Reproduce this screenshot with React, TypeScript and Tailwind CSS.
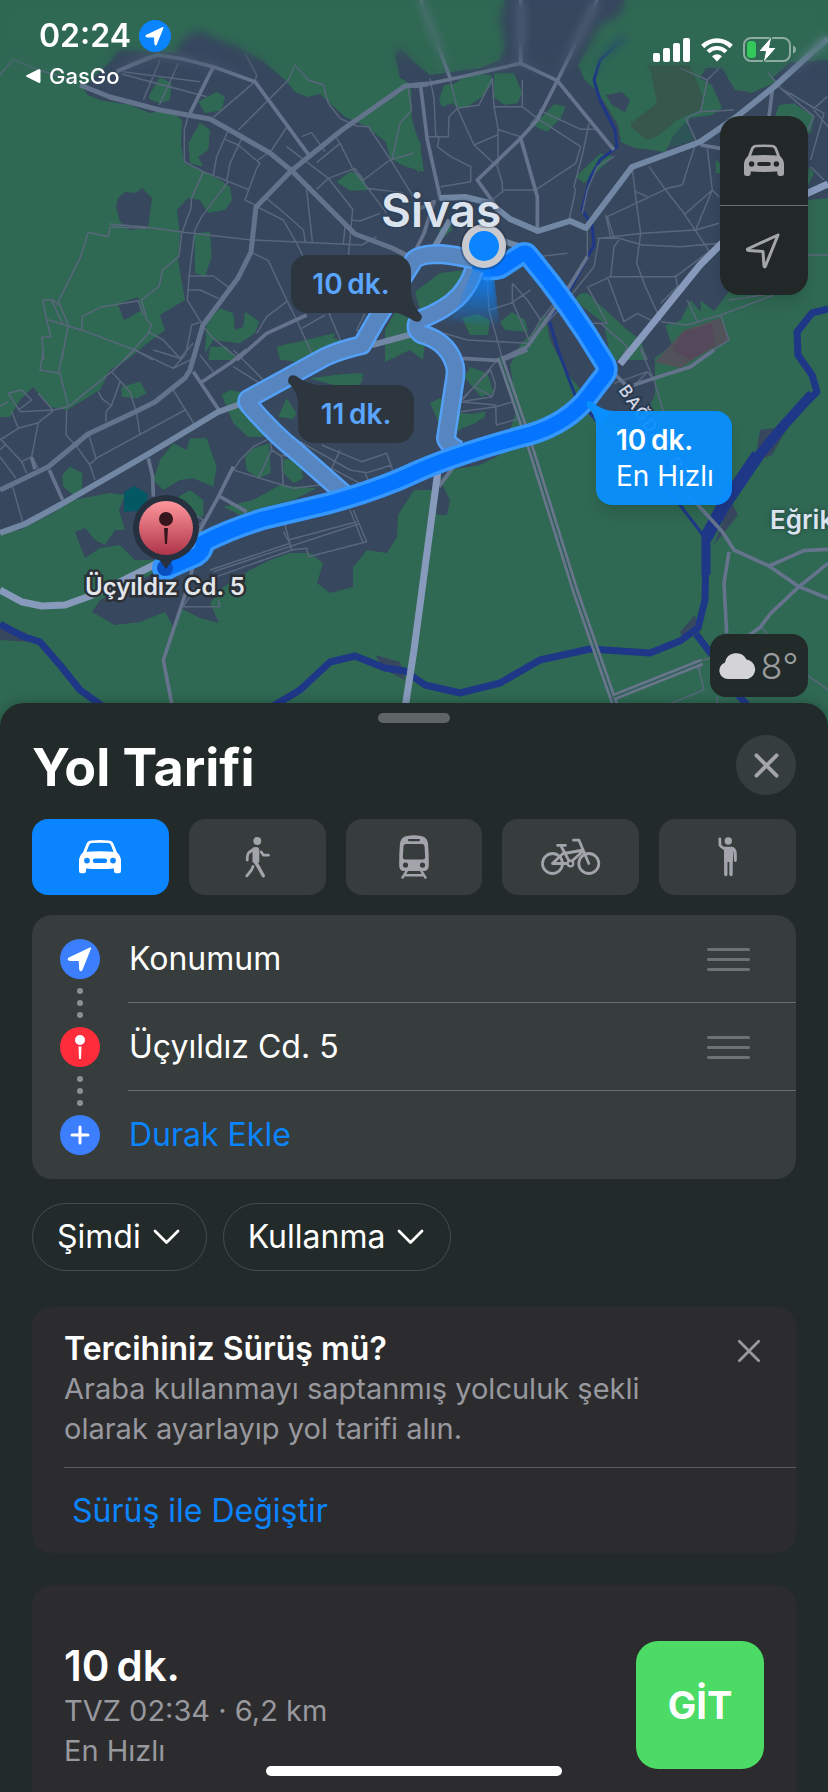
import type { ReactNode } from "react";

const QUADS = {
  nw: "translate(0 0) scale(0.33333)",
  ne: "translate(414 0) scale(0.33333)",
  sw: "translate(0 350) scale(0.33333)",
  se: "translate(414 350) scale(0.33333)",
};

const MINOR = {
  nw: "M0 225L40 178L110 208L230 245M350 210L440 170L480 160M430 300L480 180M478 315L535 190M365 222L620 290M370 215L600 245M640 352L765 245M715 390L865 240L885 195L925 240L970 255L985 310L1020 355L1070 378L1105 380L1175 485L1240 590M735 160L770 225L765 245M905 410L935 398L975 455M950 488L1020 430L1060 510L1100 560L1160 640M1020 430L1000 400M865 375L815 450L775 480M565 345L553 390V485L610 515L745 568M685 390L650 470L640 525M725 415L690 490L680 545M675 418L715 435L780 490L770 505L735 600L775 620M610 515L575 595L573 625L545 700L537 770L487 810L478 858L425 900L440 960L455 975L445 1000L400 1050L370 1080M685 545L605 650L585 690L567 830L562 900L605 970M328 672L430 680L550 697L755 720L1085 735L1130 710M330 680L325 710L265 697L242 770L175 905L205 975L185 1080M335 680L440 685M128 900H160L175 915M128 900L140 960L152 1010L125 1012L132 1080M140 958L250 992L405 1050L460 1080M155 902L190 975M245 990L247 950L300 922L415 902L430 945M448 997L490 1020L540 1075L580 1030M567 828H640L690 865M565 870H600L655 895M760 760L805 782L860 900L890 960L935 1060M860 905L800 950L770 1000M800 595L860 645L910 690L916 725M775 622L850 660L890 730L910 770M918 550L937 725M860 440L985 535L1058 628L1045 770M950 568L985 535L1065 505L1090 540L1170 480L1240 460M1100 565L1210 578M1175 485L1200 370L1235 330L1222 250M1055 660L1080 663L1140 640M1030 730L1035 680M985 935L1025 1030M905 985L975 945M608 978L640 1015L720 1080M605 965L575 975L560 1050L540 1080M1095 940L1070 990L1120 1020",
  ne: "M48 235L60 295L65 405L75 415L70 440L110 470L170 500V545L80 560M110 245L130 325L180 435L250 500L265 550V580M130 325L105 350L103 410H40M130 325L195 315L235 235L240 320L252 385V495M240 320H325V240M325 320L370 355L500 440L485 490L365 570L270 570L235 600M375 330L500 388H555M525 370L505 465L480 560L485 570L465 660M180 435L250 405M320 410L250 388M385 325L350 375M600 470L550 500L520 570L505 640M655 505L665 590L680 700L668 790L690 850L740 960M705 500L755 570L810 640L880 745L890 770M580 650L665 610L760 565L805 555L845 430M580 650L600 715M575 645L590 710M550 715H615L685 735L800 740L915 730M560 715L685 700L845 690L915 670M655 505L540 640M845 690L895 570L810 645M880 445L895 570L915 590M665 575L700 590M585 830H785L905 740M525 860L590 830L600 740L615 720M520 860L580 970H535M580 830L630 965L670 940L730 970M785 825L790 860L740 910M820 900L850 965M740 965L820 975L920 945L1080 885M920 945L945 1020L850 1080M945 900L1050 885M1180 765H1242M800 205L880 240L860 335L960 330M880 240L915 205M815 355L860 335M815 355L850 430M1060 215L1100 265L1230 340L1190 480M1130 280L1200 325L1240 290M1100 265L1200 350L1130 500M1200 330L1242 380M1190 500L1230 540M295 850L340 900L380 960M295 850V905L345 1020M345 1020L380 960L460 860L520 770V690M555 715L540 800L460 900L370 1000M90 1000L160 1020L340 1030M220 840L225 930L265 1075M225 930L290 910L350 870M370 770L460 760M620 1080L640 1040L560 970M680 1040L700 1080",
  sw: "M405 0L520 55L590 20M460 0L540 25M600 15L640 65M700 50L780 100M700 0L740 40L790 90M520 55L560 10M130 0L120 60L180 70L205 170L160 180L60 185L25 130L65 120L95 150L55 180M190 0L175 70M0 170L25 155M115 130L160 182M35 185L55 235L0 270M55 235L115 218L160 182M205 170L335 65L405 0M335 65L390 125L410 190L420 255M200 180L198 255L230 290L270 345L285 390M230 290L265 250L288 325L555 180M520 120L590 235M360 95L335 165L318 185V215M295 125L305 145L335 168M270 342L290 325M0 265L65 335L95 320L115 355M115 218L95 320M0 300L15 285M0 320L48 385M65 335L80 370M38 410L68 515M700 360L720 330L760 290L810 265L815 300L845 320L850 410M700 360L780 385L880 415L960 405M775 385L815 300M965 285L1085 335L1160 310L1178 360M900 275L1050 360L1100 368L1175 345M1020 300L995 355L1080 400M1095 370L1110 400M845 315L870 320M665 440L740 490M855 525L875 600L920 595L925 620L1100 575L1060 480M850 545L870 580L630 660M865 570L1070 515M875 600L650 680M1050 480L1090 580M640 665L1075 522M600 690L550 770H660L655 750M580 545L610 510L560 480",
  se: "M230 60L245 105L235 140L140 155M235 140L180 110L135 155L245 165L247 225L320 205M140 185L245 170L300 155M230 60L180 110M250 30L145 150M600 100L700 65L640 130M680 0L720 90L820 430M720 90L700 65M610 240L650 200M540 200L700 350M850 940L870 1020L770 1060M835 935L890 925M1040 830L1060 850M840 940L855 960L865 940M1180 975L1242 1020M910 1040V1060",
};

const SECONDARY = {
  nw: "M570 340L640 200L765 245L930 470M350 215L470 165L540 175L640 200M710 1080L800 1000L920 945",
  ne: "M0 260L110 238L320 190L430 242L600 450M20 260L40 420L80 600M430 242L370 360L320 415L190 540L240 610M320 415L370 590L370 690M110 238L20 0M320 190V0M430 242L550 0M1075 270L1065 350M860 435L920 445M0 635L60 605L30 700L0 760M340 1040L265 1075M520 770L460 870L340 1040",
  sw: "M580 65L660 185M95 322L105 358M148 360L188 450M600 100L690 40L740 0M445 325L458 380L460 440M700 350L650 450L600 540L570 690L490 930L515 1060M660 440L740 485",
  se: "M145 25L260 32L340 0M820 430L925 545L960 600L1065 648L1170 602L1242 598M1065 648L1155 710L1242 745M1242 640L1155 710L1070 790L1040 830L1000 860M945 605L930 700L938 850M660 105L720 85L830 50L900 0M605 75L640 110M115 355L75 410M75 365V400",
};

const GREENS = {
  nw: "M445 290L480 230L515 250L510 300L480 310L450 298ZM595 305L650 275L675 290L665 330L615 340ZM565 430L600 368L630 390L625 450L595 470L610 500L570 490ZM1010 545L1050 515L1085 525L1105 570L1050 572ZM583 700L630 695L635 770L615 830L585 820ZM620 960L660 925L700 940L705 990L730 980L735 935L778 965L765 1000L720 1030L640 1020L615 1060ZM630 1040L680 1040L710 1080H625ZM830 1040L960 1010L1005 1000L990 1040L900 1080H840Z",
  ne: "M75 300L90 255L120 252L165 220L232 225L235 250L205 290L160 320L130 325L115 310L85 320ZM240 220L300 220L325 280L310 310L270 315L240 290ZM345 370L385 350L420 312L455 320L440 355L420 375L400 395L385 390ZM485 530L560 460L600 470L555 510L510 550ZM75 690L110 660L115 690L90 710ZM0 400L20 430L15 520L0 500ZM520 880L500 880L480 900L570 970L590 1080L700 1080L680 1020L640 990ZM800 960L830 900L860 935L860 900L920 950L850 975L780 970ZM1080 360L1095 315L1140 310L1200 350L1190 400L1160 400ZM1180 560L1200 520L1185 500ZM905 520V480L918 490V520ZM960 220L1030 200L1060 215L1090 245L1010 280L960 240Z",
  sw: "M665 135L690 120L740 130L800 240L790 260L745 262L700 220ZM835 200L860 145L890 190L880 207ZM460 390L480 330L520 280L560 300L570 265L620 265L650 350L640 410L580 385L540 390L490 420ZM187 375L210 350L248 370L245 430L220 435L190 410ZM520 450L570 420L610 450V500L580 500ZM735 320L760 295L808 280L812 370L775 385L740 360ZM850 325L900 335L910 385L880 400L850 370ZM670 470L760 450L840 405L950 415L880 450L800 470L720 495ZM365 110L420 95L440 130L410 145L365 140ZM940 90L1000 75L1090 70L1085 95L1000 100Z",
  se: "M130 250L150 195L215 185L210 205L150 225ZM150 80L170 50L220 70L240 130L200 140Z",
};

function GreenPatches() {
  return (
    <g fill="#2f6853">
      <path transform={QUADS.nw} d={GREENS.nw} />
      <path transform={QUADS.ne} d={GREENS.ne} />
      <path transform={QUADS.sw} d={GREENS.sw} />
      <path transform={QUADS.se} d={GREENS.se} />
      <path d="M278 347L290 343L300 350L325 335L340 340L330 360L310 365L285 360ZM385 330L395 312L410 318L425 345L423 360L410 350L385 362ZM415 292L440 273L465 270L455 290L435 305L420 310ZM462 318L478 314L490 320L488 335L470 335ZM500 322L512 312L525 320L528 332L505 330ZM430 403L440 398L455 412L478 415V422L458 430L440 425ZM310 378L355 373L363 380L355 390L330 384Z" />
    </g>
  );
}

function MapCanvas() {
  const main =
    "M166 569L196 556Q204 551 203 543Q228 530 263 519L330 503Q380 489 414 473T520 437Q560 428 584 402L604 376Q609 370 604 362Q570 305 528 255Q525 251 520 255L500 268Q494 270 484 269";
  const altA =
    "M474 260Q455 255 440 254Q420 254 414 260L375 322L362 345Q340 350 325 357L250 398Q245 400 249 405Q275 435 297 452L348 497";
  const altB = "M474 270Q470 283 460 295Q446 310 419 320Q413 328 421 334Q447 341 454 363Q457 370 454 385L446 438Q446 443 458 450";
  return (
    <svg
      className="absolute inset-0 h-full w-full"
      viewBox="0 0 828 728"
      preserveAspectRatio="xMidYMin slice"
      aria-hidden="true"
    >
      <defs>
        <linearGradient id="beam" x1="0" y1="0" x2="0" y2="1">
          <stop offset="0" stopColor="#0b84ff" stopOpacity="0.9" />
          <stop offset="1" stopColor="#0b84ff" stopOpacity="0" />
        </linearGradient>
        <linearGradient id="pin" x1="0" y1="0" x2="0" y2="1">
          <stop offset="0" stopColor="#ff979c" />
          <stop offset="1" stopColor="#ae3549" />
        </linearGradient>
        <path id="bagdat" d="M618 390Q650 436 684 485L712 525" />
      </defs>
      <rect width="828" height="728" fill="#2f6853" />
      <path
        fill="#36475e"
        d="M83 88L112 60L118 50L175 52L186 36L200 30L215 38L240 48L262 60L285 80L295 92L308 97L320 94L332 105L345 117L368 127L378 136L386 142L390 158L404 166L424 172L420 145L412 120L411 84L400 78L395 55L400 48L414 62L430 75L450 72L480 68L500 60L505 45L500 20L505 0H625L620 15L600 25L590 45L578 65L585 80L596 90L606 105L618 125L621 142L635 148L652 150L665 152L672 140L685 130L690 118L712 115L722 108L712 85L700 78L706 68L722 68L735 90L750 92L765 85L790 62L828 60V198L808 200L760 230L730 290L715 310L700 318L665 325L672 345L655 358V395L650 405L625 430L598 415L585 395L565 370L550 340L545 315L535 330L520 345L510 365L515 400V415L510 430L500 455L480 465L450 470L440 480L450 500L447 515H437L433 490L414 490L398 515L397 537L387 553L367 550L353 567V587L330 593L317 583L323 563L310 553H290L270 560L250 570L240 577L222 588L210 603L219 623L200 618L180 608L175 630L165 612L140 622L115 625L92 612L100 600L120 590L150 575L165 560L135 560L120 545L100 548L85 558L80 545L75 532L85 528L95 540L105 545L115 530L125 530L119 510L125 495L110 493L73 500L53 513L20 530L0 533V417H10L20 400L33 387L50 407L67 410L100 390L110 370L127 360L145 345L165 330L160 315L185 300L178 260L180 235L177 210L188 198L200 200L208 213L225 210L232 200L230 187L220 180L205 172L184 163L181 145L182 120L170 110L150 113L130 105L100 100L88 95Z"
      />
      <path
        fill="#36475e"
        d="M118 198L125 192L136 193L142 188L152 198L148 228L130 230L120 222L116 206ZM118 304L138 297L142 310L124 320ZM606 95L622 92L630 100L625 112L612 105ZM385 505L378 480L420 470L400 500ZM370 165L385 168L398 180L405 195L385 192ZM760 430L775 428L785 432L772 455L755 462ZM730 500L738 515L714 545ZM0 628L25 632L30 642L0 640ZM680 632L695 615L698 630L685 642ZM375 655L400 662L405 680L385 670Z"
      />
      <GreenPatches />
      <path fill="#37574d" d="M647 65H690L704 100L700 110L677 120L657 137L647 140L631 127V123L657 103L651 73Z" />
      <path fill="#52525a" d="M684 330L720 318L729 340L704 353L680 368L655 362Z" />
      <path fill="#54485a" d="M684 332L712 324L715 345L690 360L672 350Z" />
      <path fill="#2d5558" d="M670 148L672 138L685 122L692 135L694 140Z" />
      <path fill="#045864" d="M124 492L134 486L148 494L146 510L124 512Z" />

      <g fill="none" stroke="#1f3787" strokeLinejoin="round">
        <path strokeWidth="7" d="M0 624L22 636L40 642L60 665L80 690L105 708H270L300 690L330 662L355 656L385 668L405 671L425 685L460 693L500 683L540 660L590 649L650 653L680 641L698 628L705 600L706 540" />
        <path strokeWidth="9" d="M706 575V535" />
        <path strokeWidth="13" d="M706 538L722 508L758 455" />
        <path strokeWidth="10" d="M750 466L785 424L812 394" />
        <path strokeWidth="7" d="M790 418L817 392L812 375L798 355L797 332L812 313L828 309M696 634L712 655M738 695L750 708" />
        <path strokeWidth="3" d="M625 37L600 60L594 80L600 100L615 130L617 147L600 160L590 178L582 210L592 225L594 245L570 290L549 320L558 350L575 395L600 425L680 505L703 535" />
      </g>

      <g fill="none" stroke="#59677c" strokeWidth="4.5" strokeLinejoin="round">
        <path transform={QUADS.nw} d={MINOR.nw} />
        <path transform={QUADS.ne} d={MINOR.ne} />
        <path transform={QUADS.sw} d={MINOR.sw} />
        <path transform={QUADS.se} d={MINOR.se} />
      </g>
      <g fill="none" stroke="#65748c" strokeWidth="11" strokeLinejoin="round">
        <path transform={QUADS.nw} d={SECONDARY.nw} />
        <path transform={QUADS.ne} d={SECONDARY.ne} />
        <path transform={QUADS.sw} d={SECONDARY.sw} />
        <path transform={QUADS.se} d={SECONDARY.se} />
      </g>
      <g fill="none" strokeLinejoin="round">
        <path stroke="#68768c" strokeWidth="7" d="M500 357L525 430L575 590L616 708M614 697L702 662" />
        <path stroke="#2f5f58" strokeWidth="1.5" d="M500 357L525 430L575 590L616 708M614 697L702 662" />
        <path stroke="#64738c" strokeWidth="5" d="M80 85L110 97L160 110L210 119L228 129L270 153L292 171L355 234L392 248L420 262M0 490L48 467L88 434L135 412L155 402L185 378L190 370L203 325L238 278L251 252L256 207L291 171L342 130L405 86L428 84" />
        <path stroke="#7287a3" strokeWidth="6" d="M0 533L25 524L60 505L150 453L218 412L246 402M440 198L465 197L490 203L510 219L538 231L570 221L586 228L632 167L700 142L735 118L775 86L828 38M372 345L420 332M430 255L450 220M500 240L522 247" />
        <path stroke="#879abc" strokeWidth="7" d="M405 708L414 650L438 470M620 364L700 265L722 243M806 194L828 184M0 590L22 602L42 606L65 605L90 596L120 582L160 562" />
      </g>

      <text fill="#cfd8e6" stroke="#2b3a4e" strokeWidth="4" paintOrder="stroke" fontSize="17" fontWeight="500" fontFamily="Inter, sans-serif" letterSpacing="2">
        <textPath href="#bagdat">BAĞDAT CD.</textPath>
      </text>

      <path fill="url(#beam)" d="M474 262L440 325H500L492 262Z" />
      <g fill="none" strokeLinejoin="round">
        <path stroke="#54a0f7" strokeWidth="20" d={altA} />
        <path stroke="#54a0f7" strokeWidth="20" d={altB} />
        <path stroke="#5685bf" strokeWidth="15" d={altA} />
        <path stroke="#5685bf" strokeWidth="15" d={altB} />
        <path stroke="#3697ff" strokeWidth="22" d={main} />
        <circle cx="165" cy="568" r="13" fill="#3697ff" />
        <path stroke="#0575ff" strokeWidth="15" d={main} />
      </g>
      <path fill="url(#beam)" d="M476 262L452 320L500 330L488 262Z" opacity="0.6" />
      <circle cx="165" cy="568" r="8" fill="#0a4fc0" />

      <circle cx="484" cy="246" r="24" fill="#1c2b40" opacity="0.35" />
      <circle cx="484" cy="246" r="22" fill="#c9cad0" />
      <circle cx="484" cy="246" r="15" fill="#0b84ff" />

      <path fill="#26303e" d="M158 558H174L166 569Z" />
      <circle cx="166" cy="528" r="33" fill="#26303e" />
      <circle cx="166" cy="528" r="27" fill="url(#pin)" />
      <circle cx="166" cy="519" r="7" fill="#36161d" />
      <path fill="#36161d" d="M164 528H168L167 544H165Z" />

      <g fill="#2d363f">
        <path d="M390 311Q402 313 414 321Q421 324 422 316Q412 305 411 292Z" />
        <path d="M298 402Q298 393 288 382Q288 373 296 376Q307 384 318 385Z" />
      </g>
      <path fill="#0a8fff" d="M596 425Q596 415 587 406Q585 399 592 402Q603 411 614 411Z" />
    </svg>
  );
}

function CarIcon({ className }: { className: string }) {
  return (
    <svg className={className} viewBox="0 0 42 34" fill="currentColor" aria-hidden="true">
      <path
        fillRule="evenodd"
        d="M4 12.5L7.4 4Q8.8.6 12.5.4Q21-.2 29.500.4Q33.200.6 34.600 4L38 12.500Q42 16 42 21V31a2.200 2.200 0 0 1-2.200 2.200h-2.600A2.200 2.200 0 0 1 35 31V28.500Q21 29.500 7 28.500V31a2.200 2.200 0 0 1-2.200 2.200H2.200A2.200 2.200 0 0 1 0 31V21Q0 16 4 12.500ZM7.500 11.800Q21 10.800 34.500 11.800L31.900 5Q31.200 3.200 29 3Q21 2.400 13 3Q10.800 3.200 10.100 5ZM8 17.700a2.900 2.900 0 1 0 0 5.800a2.900 2.900 0 1 0 0-5.800ZM34 17.700a2.900 2.900 0 1 0 0 5.800a2.900 2.900 0 1 0 0-5.800ZM16 18.500a2.200 2.200 0 0 0 0 4.400H26a2.200 2.200 0 0 0 0-4.400Z"
      />
    </svg>
  );
}

function WalkIcon() {
  return (
    <svg className="h-[41px] w-[25px]" viewBox="0 0 25 41" fill="none" stroke="currentColor" strokeLinecap="round" strokeLinejoin="round" aria-hidden="true">
      <circle cx="12.300" cy="4" r="3.900" fill="currentColor" stroke="none" />
      <path fill="currentColor" stroke="none" d="M8 10.500Q14 8.500 14.300 13V25Q12 28 7.500 25V15Z" />
      <path strokeWidth="2.800" d="M9 12L4 15.500Q2.200 17 2.200 23M16.200 15L18.500 18.200H23.500M8 29.500L6.500 33L1.800 38.800" />
      <path strokeWidth="3.400" d="M10 24.500L13.500 30L18.300 38.800" />
    </svg>
  );
}

function TrainIcon() {
  return (
    <svg className="h-[44px] w-[30px]" viewBox="0 0 30 44" fill="currentColor" aria-hidden="true">
      <path
        fillRule="evenodd"
        d="M8 1Q15-.5 22 1Q28 2 29 8Q30 20 29.800 31Q29.500 36 25 36H5Q.5 36 .2 31Q0 20 1 8Q2 2 8 1ZM10 4a1 1 0 0 0 0 2.200H20a1 1 0 0 0 0-2.200ZM7 9Q5 9 4.500 11L3.800 22.500Q4 24.500 6 24.500H24Q26 24.500 26.200 22.500L25.500 11Q25 9 23 9ZM6.500 27.500a2.600 2.600 0 1 0 0 5.200a2.600 2.600 0 1 0 0-5.200ZM23.500 27.500a2.600 2.600 0 1 0 0 5.200a2.600 2.600 0 1 0 0-5.200Z"
      />
      <path fill="none" stroke="currentColor" strokeWidth="2.400" d="M8 35.500L3 43.500M22 35.500L27 43.500M6 40.300H24" />
    </svg>
  );
}

function BikeIcon() {
  return (
    <svg className="h-[38px] w-[60px]" viewBox="0 0 60 38" fill="none" stroke="currentColor" strokeWidth="2.800" strokeLinecap="round" strokeLinejoin="round" aria-hidden="true">
      <circle cx="11.500" cy="25.500" r="10" />
      <circle cx="47.800" cy="25.500" r="10" />
      <circle cx="29.500" cy="25.500" r="2.800" strokeWidth="2.200" />
      <path d="M16.500 7.300H24.500M20 8L27.800 22.500M23 15.500L40 12.500M40.500 14.500L31 23M11.500 25.500H26M11.500 25.500L22 15.500M47.800 25.500L38 2.200H32.500" />
    </svg>
  );
}

function HailIcon() {
  return (
    <svg className="h-[40px] w-[19px]" viewBox="0 0 19 40" fill="none" stroke="currentColor" strokeLinecap="round" strokeLinejoin="round" aria-hidden="true">
      <circle cx="10.300" cy="4" r="3.700" fill="currentColor" stroke="none" />
      <path strokeWidth="2.800" d="M1.800 1.800L2 8Q2.200 9.200 7 12M15 11.500Q17.400 13 17.400 17V23.500" />
      <path fill="currentColor" stroke="none" d="M5.800 9.800H13.500Q16 10 15.800 13L14.800 25H6V14Z" />
      <path strokeWidth="3.400" d="M7.800 24V37.500M13 24V37.500" />
    </svg>
  );
}

function ArrowIcon({ className }: { className: string }) {
  return (
    <svg className={className} viewBox="0 0 24 24" fill="currentColor" stroke="currentColor" strokeWidth="1.500" strokeLinejoin="round" aria-hidden="true">
      <path d="M21.500 2L1.500 11.500Q1 13 3 13L11.500 13L12 21.500Q12.500 23.500 13.500 22Z" />
    </svg>
  );
}

function StatusBar() {
  return (
    <header className="relative flex items-start justify-between pt-4 pr-[31px] pl-[25px] text-white">
      <div>
        <div className="flex items-center gap-2 pl-[14px] text-[32px] leading-10 font-semibold">
          02:24
          <span className="flex size-8 items-center justify-center rounded-full bg-[#0b84ff]">
            <ArrowIcon className="size-5" />
          </span>
        </div>
        <a href="#gasgo" className="mt-1 flex items-center gap-2 text-[22px] leading-8 font-medium">
          <svg className="h-[14px] w-4" viewBox="0 0 16 14" fill="currentColor" aria-hidden="true">
            <path d="M14 0Q15.500 0 15.500 1.500V12.500Q15.500 14 14 14L2 8Q0 7 2 6Z" />
          </svg>
          GasGo
        </a>
      </div>
      <div className="flex items-center gap-[10px] pt-5">
        <svg className="h-6 w-[38px]" viewBox="0 0 38 24" fill="currentColor" aria-hidden="true">
          <rect x="0" y="15" width="7" height="9" rx="2" />
          <rect x="10" y="10" width="7" height="14" rx="2" />
          <rect x="20" y="5" width="7" height="19" rx="2" />
          <rect x="30" y="0" width="7" height="24" rx="2" />
        </svg>
        <svg className="h-6 w-8" viewBox="0 0 32 24" fill="none" stroke="currentColor" aria-hidden="true">
          <path strokeWidth="4.500" d="M1.700 8.500Q8 2.600 16 2.600T30.300 8.500" />
          <path strokeWidth="4.200" d="M7 13.800Q11 10 16 10T25 13.800" />
          <path fill="currentColor" stroke="none" d="M11 18.200Q16 14.300 21 18.200L16 23.500Z" />
        </svg>
        <svg className="h-[27px] w-[54px]" viewBox="0 0 54 27" aria-hidden="true">
          <rect x="1" y="2" width="46" height="23" rx="7" fill="none" stroke="#fff" strokeOpacity="0.450" strokeWidth="2" />
          <path d="M50 9.500Q53 10.500 53 13.500T50 17.500Z" fill="#fff" fillOpacity="0.450" />
          <rect x="4" y="5" width="9" height="17" rx="3.500" fill="#34c759" />
          <path d="M29 0L15.500 15.500H22.500L20 27L33.500 11.500H26.500Z" fill="#fff" stroke="#2f6853" strokeWidth="1" />
        </svg>
      </div>
    </header>
  );
}

function MapSection() {
  return (
    <section aria-label="Harita" className="relative h-[728px] shrink-0 overflow-hidden">
      <MapCanvas />
      <div className="absolute inset-x-0 top-0 h-20 mask-b-from-50% backdrop-blur-[5px]" />
      <StatusBar />

      <h2 className="absolute top-[183px] left-[381px] text-[46px] leading-[54px] font-semibold text-[#dbe3ee] [clip-path:inset(0_0_9px_0)] [text-shadow:0_0_4px_#26344a]">
        Sivas
      </h2>
      <div className="absolute top-[504px] left-[770px] text-[26px] leading-8 font-semibold whitespace-nowrap text-[#dbe3ee] [text-shadow:0_0_4px_#22403f]">
        Eğriköprü
      </div>
      <div className="absolute top-[571px] left-[85px] text-[24px] leading-8 font-semibold whitespace-nowrap text-[#e2e6ea] [paint-order:stroke] [-webkit-text-stroke:5px_#2b2f36]">
        Üçyıldız Cd. 5
      </div>

      <button className="absolute top-[255px] left-[291px] h-[58px] w-[120px] rounded-2xl bg-[#2d363f] text-[28px] font-semibold text-[#5aa5ff]">
        10&#8201;dk.
      </button>
      <button className="absolute top-[385px] left-[298px] h-[58px] w-[116px] rounded-2xl bg-[#2d363f] text-[28px] font-semibold text-[#5aa5ff]">
        11&#8201;dk.
      </button>
      <button className="absolute top-[411px] left-[596px] h-[94px] w-[136px] rounded-2xl bg-[#0a8fff]/95 pl-5 text-left text-[28px] leading-9 text-white shadow-lg">
        <strong className="block font-semibold">10&#8201;dk.</strong>
        En Hızlı
      </button>

      <div className="absolute top-[116px] right-5 flex w-[88px] flex-col overflow-hidden rounded-[20px] bg-[#222827] text-[#a5a6a7] shadow-lg">
        <button aria-label="Harita modu" className="flex h-[90px] items-center justify-center border-b border-[#6b706f]">
          <CarIcon className="h-[33px] w-10" />
        </button>
        <button aria-label="Konumuma git" className="flex h-[89px] items-center justify-center">
          <svg className="size-9" viewBox="0 0 36 36" fill="none" stroke="currentColor" strokeWidth="3" strokeLinejoin="round" aria-hidden="true">
            <path d="M32 2L1.500 16Q1 17.500 3 17.500L17 18.500L18 33Q18.500 35 19.500 33Z" />
          </svg>
        </button>
      </div>

      <div className="absolute right-5 bottom-[31px] flex h-[63px] w-[98px] items-center justify-center rounded-2xl bg-[#222b29] text-[36px] font-light text-[#9b9d9e]">
        <svg className="h-[27px] w-[39px] shrink-0" viewBox="0 0 39 27" fill="#d3d3d8" aria-hidden="true">
          <path d="M9 27A8.500 8.500 0 0 1 6 10.500A11.500 11.500 0 0 1 27.500 7.500A10 10 0 0 1 29 27Z" />
        </svg>
        <span className="ml-[2px]">8°</span>
      </div>
    </section>
  );
}

const MODES: { label: string; icon: ReactNode }[] = [
  { label: "Sürüş", icon: <CarIcon className="h-[34px] w-[42px]" /> },
  { label: "Yürüme", icon: <WalkIcon /> },
  { label: "Toplu Taşıma", icon: <TrainIcon /> },
  { label: "Bisiklet", icon: <BikeIcon /> },
  { label: "Araç Çağırma", icon: <HailIcon /> },
];

function ModeTabs() {
  return (
    <div className="mt-6 grid grid-cols-5 gap-5">
      {MODES.map((mode, i) => (
        <button
          key={mode.label}
          aria-label={mode.label}
          aria-pressed={i === 0}
          className={
            "flex h-[76px] items-center justify-center rounded-2xl " +
            (i === 0 ? "bg-[#0b84ff] text-white" : "bg-[#363d3c] text-[#a2a3ab]")
          }
        >
          {mode.icon}
        </button>
      ))}
    </div>
  );
}

function Dots() {
  return (
    <span className="absolute top-[73px] left-[45px] flex flex-col gap-[6px]" aria-hidden="true">
      <span className="size-[6px] rounded-full bg-[#8e8e93]" />
      <span className="size-[6px] rounded-full bg-[#8e8e93]" />
      <span className="size-[6px] rounded-full bg-[#8e8e93]" />
    </span>
  );
}

function Handle() {
  return (
    <button aria-label="Sırala" className="mr-[46px] flex w-[43px] flex-col gap-[7px] pt-[2px]">
      <span className="h-[3px] rounded bg-[#6e7275]" />
      <span className="h-[3px] rounded bg-[#6e7275]" />
      <span className="h-[3px] rounded bg-[#6e7275]" />
    </button>
  );
}

function Stops() {
  return (
    <ul className="mt-5 rounded-[20px] bg-[#363d3c] text-[32px] text-white">
      <li className="relative flex h-[88px] items-center pl-7">
        <span className="flex size-10 items-center justify-center rounded-full bg-[#3b7fff]">
          <ArrowIcon className="size-[26px]" />
        </span>
        <div className="ml-7 flex h-full flex-1 items-center justify-between border-b border-[#66706e] pl-px">
          Konumum
          <Handle />
        </div>
        <Dots />
      </li>
      <li className="relative flex h-[88px] items-center pl-7">
        <span className="flex size-10 items-center justify-center rounded-full bg-[#ff2d3c]">
          <svg className="h-6 w-[10px]" viewBox="0 0 10 24" fill="currentColor" aria-hidden="true">
            <circle cx="5" cy="5" r="5" />
            <path d="M3.500 11.500H6.500L6 24H4Z" />
          </svg>
        </span>
        <div className="ml-7 flex h-full flex-1 items-center justify-between border-b border-[#66706e] pl-px">
          Üçyıldız Cd. 5
          <Handle />
        </div>
        <Dots />
      </li>
      <li className="flex h-[88px] items-center pl-7">
        <span className="flex size-10 items-center justify-center rounded-full bg-[#3b7fff]">
          <svg className="size-5" viewBox="0 0 20 20" stroke="currentColor" strokeWidth="3" strokeLinecap="round" aria-hidden="true">
            <path d="M10 2V18M2 10H18" />
          </svg>
        </span>
        <button className="ml-7 pl-px text-[#0b84ff]">Durak Ekle</button>
      </li>
    </ul>
  );
}

function Chip({ children }: { children: ReactNode }) {
  return (
    <button className="flex h-[68px] items-center gap-3 rounded-full border border-[#474c4b] pr-[26px] pl-6 text-[32px] text-white">
      {children}
      <svg className="h-4 w-[27px]" viewBox="0 0 27 16" fill="none" stroke="currentColor" strokeWidth="2.800" strokeLinecap="round" strokeLinejoin="round" aria-hidden="true">
        <path d="M2 2L13.500 13.500L25 2" />
      </svg>
    </button>
  );
}

function CloseGlyph({ className }: { className: string }) {
  return (
    <svg className={className} viewBox="0 0 26 26" stroke="currentColor" strokeLinecap="round" aria-hidden="true">
      <path d="M2.500 2.500L23.500 23.500M23.500 2.500L2.500 23.500" />
    </svg>
  );
}

function Suggestion() {
  return (
    <section className="mt-9 rounded-[20px] bg-[#2c2c2e] pl-8">
      <div className="flex justify-between pt-[22px] pb-[18px]">
        <div>
          <h2 className="text-[32px] leading-10 font-semibold text-white">Tercihiniz Sürüş mü?</h2>
          <p className="w-[610px] text-[29px] leading-10 text-[#98989f]">
            Araba kullanmayı saptanmış yolculuk şekli olarak ayarlayıp yol tarifi alın.
          </p>
        </div>
        <button aria-label="Kapat" className="mt-[10px] mr-[35px] size-6 shrink-0 text-[#98989f]">
          <CloseGlyph className="size-6 stroke-3" />
        </button>
      </div>
      <div className="border-t border-[#5c5c5f] pl-2">
        <button className="h-[85px] text-[32px] text-[#0b84ff]">Sürüş ile Değiştir</button>
      </div>
    </section>
  );
}

function RouteCard() {
  return (
    <section className="mt-8 flex flex-1 items-start justify-between rounded-t-[20px] bg-[#2c2c2e] px-8 pt-14">
      <div className="text-[29px] leading-10 text-[#98989f]">
        <h2 className="text-[42px] leading-[50px] font-semibold text-white">10&#8201;dk.</h2>
        <p>TVZ 02:34 · 6,2 km</p>
        <p>En Hızlı</p>
      </div>
      <button className="size-32 rounded-[22px] bg-[#4cdb64] text-[38px] font-bold text-white">GİT</button>
    </section>
  );
}

export default function App() {
  return (
    <main lang="tr" className="relative flex h-screen flex-col overflow-hidden bg-[#222b29] font-['Inter','Noto_Sans',sans-serif]">
      <MapSection />
      <section className="relative -mt-[25px] flex flex-1 flex-col rounded-t-[24px] bg-[#222b29] px-8 pt-[10px] shadow-[0_0_12px_rgba(0,0,0,0.25)]">
        <div className="h-[10px] w-[72px] self-center rounded-full bg-[#5f6566]" />
        <div className="mt-3 flex items-center justify-between">
          <h1 className="pt-[6px] text-[52px] leading-[54px] font-bold text-white">Yol Tarifi</h1>
          <button aria-label="Kapat" className="flex size-[60px] items-center justify-center rounded-full bg-[#363d3f] text-[#a2a3ab]">
            <CloseGlyph className="size-[25px] stroke-4" />
          </button>
        </div>
        <ModeTabs />
        <Stops />
        <div className="mt-6 flex gap-4">
          <Chip>Şimdi</Chip>
          <Chip>Kullanma</Chip>
        </div>
        <Suggestion />
        <RouteCard />
      </section>
      <div className="absolute bottom-4 left-1/2 h-[10px] w-[296px] -translate-x-1/2 rounded-full bg-white" />
    </main>
  );
}
